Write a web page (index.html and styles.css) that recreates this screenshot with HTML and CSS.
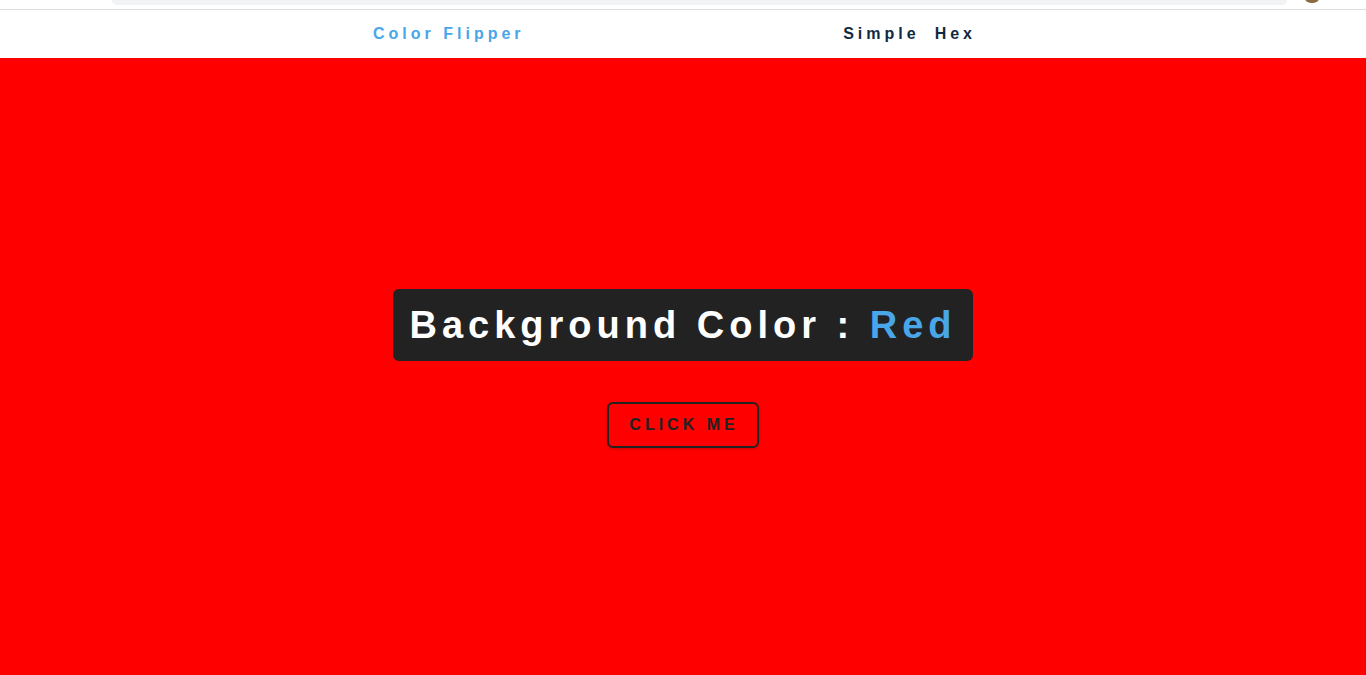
FILE: index.html
```html
<!DOCTYPE html>
<html lang="en">
<head>
<meta charset="utf-8">
<title>Color Flipper</title>
<link rel="stylesheet" href="styles.css">
</head>
<body>
<div class="chrome">
  <div class="chrome-bar"></div>
  <span class="chrome-avatar"></span>
</div>
<nav class="nav">
  <div class="nav-center">
    <h4 class="logo">Color Flipper</h4>
    <ul class="nav-links">
      <li><a href="#">Simple</a></li>
      <li><a href="#">Hex</a></li>
    </ul>
  </div>
</nav>
<main class="main">
  <h2 class="title">Background Color : <span class="color">Red</span></h2>
  <button class="btn" type="button">click me</button>
</main>
</body>
</html>
```
FILE: styles.css
```css
* { box-sizing: border-box; margin: 0; padding: 0; }
html, body { height: 100%; }
body {
  font-family: "Liberation Sans", Arial, sans-serif;
  background: #fff;
  display: flex;
  flex-direction: column;
  overflow: hidden;
}
.chrome {
  height: 10px;
  flex: none;
  border-bottom: 1px solid #dadce0;
  position: relative;
  background: #fff;
}
.chrome-bar {
  margin-left: 112px;
  width: 1175px;
  height: 5px;
  background: #f1f3f4;
  border-radius: 0 0 10px 10px;
}
.chrome-avatar {
  position: absolute;
  left: 1305px;
  top: -6px;
  width: 14px;
  height: 9px;
  border-radius: 50%;
  background: #8a6a3e;
}
.nav {
  height: 48px;
  flex: none;
  background: #fff;
  display: flex;
  align-items: center;
}
.nav-center {
  margin-left: 373px;
  width: 603px;
  display: flex;
  justify-content: space-between;
  align-items: center;
}
.logo {
  color: #49a6e9;
  font-size: 16px;
  font-weight: 700;
  letter-spacing: 4px;
}
.nav-links {
  list-style: none;
  display: flex;
  gap: 15px;
}
.nav-links a {
  text-decoration: none;
  color: #102a42;
  font-size: 16px;
  font-weight: 700;
  letter-spacing: 4px;
}
.main {
  flex: 1;
  background: #ff0000;
  display: flex;
  flex-direction: column;
  align-items: center;
  justify-content: center;
  gap: 41px;
  padding-top: 3px;
}
.title {
  background: #222;
  color: #fff;
  font-size: 38px;
  font-weight: 700;
  letter-spacing: 5px;
  line-height: 48px;
  padding: 12px 16px;
  border-radius: 6px;
}
.color { color: #49a6e9; }
.btn {
  background: transparent;
  border: 2px solid #222;
  border-radius: 6px;
  color: #222;
  font-family: "Liberation Sans", Arial, sans-serif;
  font-size: 16px;
  font-weight: 700;
  text-transform: uppercase;
  letter-spacing: 4px;
  padding: 12px 18px 13px 20px;
  line-height: 17px;
  box-shadow: 0 1px 3px rgba(0,0,0,0.2);
}
```
